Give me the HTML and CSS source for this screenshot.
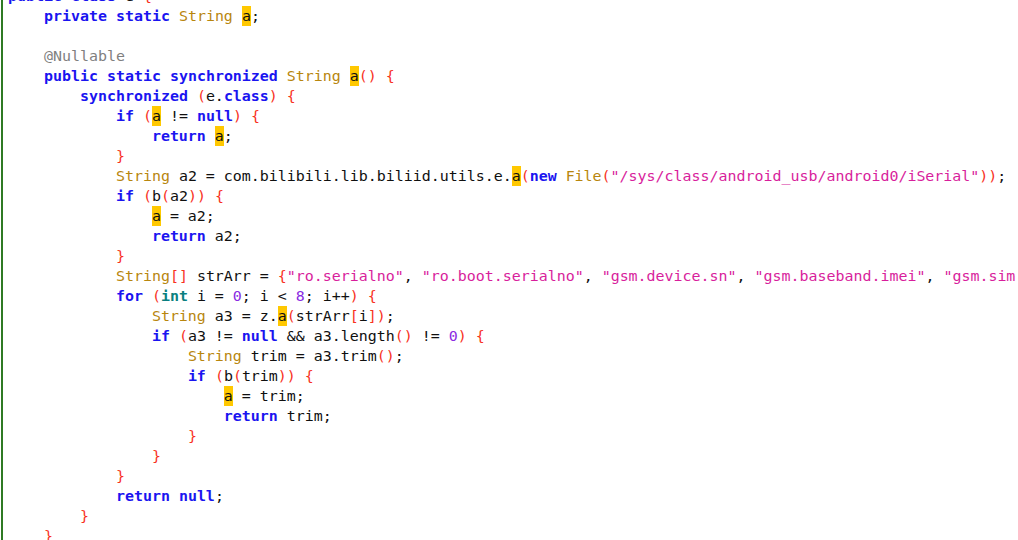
FILE: index.html
```html
<!DOCTYPE html>
<html>
<head>
<meta charset="utf-8">
<link rel="stylesheet" href="styles.css">
</head>
<body>
<div class="editor">
<pre class="code"><span class="kw">public</span> <span class="kw">class</span> e <span class="br">{</span>
    <span class="kw">private</span> <span class="kw">static</span> <span class="ty">String</span> <span class="hl">a</span>;

    <span class="an">@Nullable</span>
    <span class="kw">public</span> <span class="kw">static</span> <span class="kw">synchronized</span> <span class="ty">String</span> <span class="hl">a</span><span class="br">()</span> <span class="br">{</span>
        <span class="kw">synchronized</span> <span class="br">(</span>e.<span class="kw">class</span><span class="br">)</span> <span class="br">{</span>
            <span class="kw">if</span> <span class="br">(</span><span class="hl">a</span> != <span class="kw">null</span><span class="br">)</span> <span class="br">{</span>
                <span class="kw">return</span> <span class="hl">a</span>;
            <span class="br">}</span>
            <span class="ty">String</span> a2 = com.bilibili.lib.biliid.utils.e.<span class="hl">a</span><span class="br">(</span><span class="kw">new</span> <span class="ty">File</span><span class="br">(</span><span class="st">"/sys/class/android_usb/android0/iSerial"</span><span class="br">))</span>;
            <span class="kw">if</span> <span class="br">(</span>b<span class="br">(</span>a2<span class="br">))</span> <span class="br">{</span>
                <span class="hl">a</span> = a2;
                <span class="kw">return</span> a2;
            <span class="br">}</span>
            <span class="ty">String</span><span class="br">[]</span> strArr = <span class="br">{</span><span class="st">"ro.serialno"</span>, <span class="st">"ro.boot.serialno"</span>, <span class="st">"gsm.device.sn"</span>, <span class="st">"gsm.baseband.imei"</span>, <span class="st">"gsm.sim.serial"</span>, <span class="st">"ril.serialnumber"</span><span class="br">}</span>;
            <span class="kw">for</span> <span class="br">(</span><span class="kt">int</span> i = <span class="nu">0</span>; i &lt; <span class="nu">8</span>; i++<span class="br">)</span> <span class="br">{</span>
                <span class="ty">String</span> a3 = z.<span class="hl">a</span><span class="br">(</span>strArr<span class="br">[</span>i<span class="br">])</span>;
                <span class="kw">if</span> <span class="br">(</span>a3 != <span class="kw">null</span> &amp;&amp; a3.length<span class="br">()</span> != <span class="nu">0</span><span class="br">)</span> <span class="br">{</span>
                    <span class="ty">String</span> trim = a3.trim<span class="br">()</span>;
                    <span class="kw">if</span> <span class="br">(</span>b<span class="br">(</span>trim<span class="br">))</span> <span class="br">{</span>
                        <span class="hl">a</span> = trim;
                        <span class="kw">return</span> trim;
                    <span class="br">}</span>
                <span class="br">}</span>
            <span class="br">}</span>
            <span class="kw">return</span> <span class="kw">null</span>;
        <span class="br">}</span>
    <span class="br">}</span>
<span class="br">}</span></pre>
</div>
</body>
</html>
```
FILE: styles.css
```css
html, body {
  margin: 0;
  padding: 0;
  background: #ffffff;
  overflow: hidden;
}

.editor {
  width: 1018px;
  height: 540px;
  overflow: hidden;
  box-sizing: border-box;
  margin-left: 1px;
  border-left: 2px solid #2f7a24;
  padding-left: 5px;
}

.code {
  margin: -14px 0 0 0;
  font-family: "DejaVu Sans Mono", "Liberation Mono", monospace;
  font-size: 14.95px;
  line-height: 20px;
  color: #101010;
  white-space: pre;
}

.kw {
  color: #1a14f0;
  font-weight: bold;
}

.kt {
  color: #0a7f80;
  font-weight: bold;
}

.ty {
  color: #b8860e;
}

.st {
  color: #d81e9c;
}

.br {
  color: #f8321e;
}

.nu {
  color: #8a2be2;
}

.an {
  color: #7f7f7f;
}

.hl {
  background: #ffc800;
  padding: 1px 0;
}
```
